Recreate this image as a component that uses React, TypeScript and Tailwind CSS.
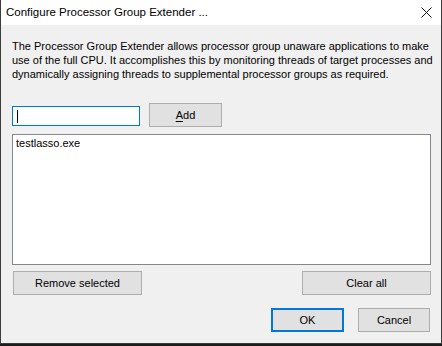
const font = { fontFamily: '"Liberation Sans", Arial, sans-serif' };

function WinButton({
  label,
  width,
  primary,
  className = "",
}: {
  label: React.ReactNode;
  width: string;
  primary?: boolean;
  className?: string;
}) {
  return (
    <button
      className={[
        "h-[24px] bg-[#e1e1e1] text-[11px] text-black flex items-center justify-center",
        primary ? "border-2 border-[#0078d7]" : "border border-[#adadad]",
        width,
        className,
      ].join(" ")}
    >
      {label}
    </button>
  );
}

export default function App() {
  return (
    <div className="w-[442px] h-[346px] bg-[#1c1c1c] overflow-hidden" style={font}>
      <div className="w-[442px] h-[344px] border-l border-r border-b border-[#3c3c3c] bg-[#f0f0f0] flex flex-col">
        {/* Title bar */}
        <div className="h-[25px] bg-white flex items-center justify-between pl-[5px] pr-[8px]">
          <span className="text-[11.5px] text-black leading-none">Configure Processor Group Extender ...</span>
          <svg width="11" height="11" viewBox="0 0 11 11" className="mr-[1px]">
            <path d="M0.5 0.5 L10.5 10.5 M10.5 0.5 L0.5 10.5" stroke="#111" strokeWidth="1" fill="none" />
          </svg>
        </div>

        {/* Body */}
        <div className="flex flex-col pl-[11px]">
          <p className="mt-[14px] text-[11px] leading-[14px] text-black whitespace-nowrap">
            The Processor Group Extender allows processor group unaware applications to make
            <br />
            use of the full CPU. It accomplishes this by monitoring threads of target processes and
            <br />
            dynamically assigning threads to supplemental processor groups as required.
          </p>

          {/* Input row */}
          <div className="flex items-start mt-[22px]">
            <div className="mt-[3px] w-[128px] h-[20px] bg-white border border-[#0078d7] flex items-center pl-[4px]">
              <div className="w-px h-[13px] bg-black" />
            </div>
            <WinButton
              width="w-[73px]"
              className="ml-[9px]"
              label={
                <span>
                  <span className="underline underline-offset-2">A</span>dd
                </span>
              }
            />
          </div>

          {/* List */}
          <div className="mt-[7px] w-[419px] h-[131px] bg-white border border-[#828790] px-[3px] pt-[1px]">
            <div className="text-[11px] leading-[15px] text-black">testlasso.exe</div>
          </div>

          {/* Remove / Clear row */}
          <div className="flex justify-between w-[418px] ml-[1px] mt-[6px]">
            <WinButton width="w-[129px]" label="Remove selected" />
            <WinButton width="w-[129px]" label="Clear all" />
          </div>

          {/* OK / Cancel */}
          <div className="flex justify-end w-[419px] mt-[13px]">
            <WinButton width="w-[73px]" primary label="OK" />
            <WinButton width="w-[72px]" className="ml-[14px] mr-[1px]" label="Cancel" />
          </div>
        </div>
      </div>
    </div>
  );
}
